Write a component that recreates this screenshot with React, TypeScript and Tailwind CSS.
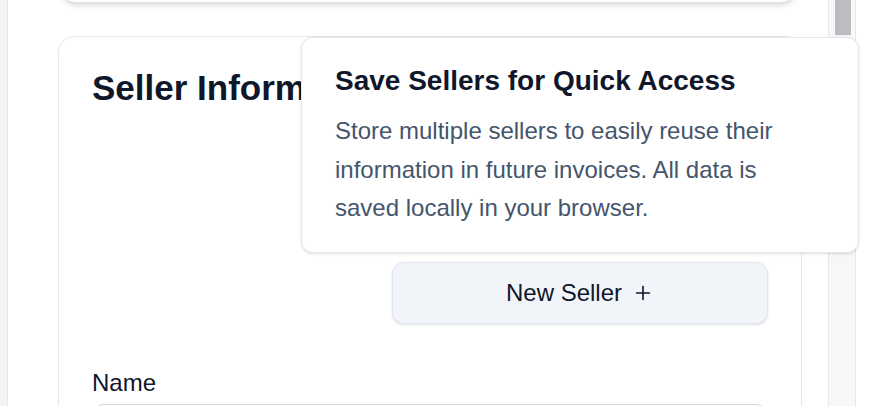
import React from 'react';
import { Plus } from 'lucide-react';

const App: React.FC = () => {
  return (
    <div className="relative w-[888px] h-[406px] overflow-hidden bg-white flex font-['Liberation_Sans',Arial,sans-serif] text-slate-900">
      {/* left gutter */}
      <div className="w-2 shrink-0 bg-gray-100 border-r border-gray-200"></div>

      {/* scrolling content */}
      <div className="w-[820px] shrink-0 flex flex-col">
        {/* previous card, scrolled mostly out of view */}
        <div className="ml-[52px] w-[737px] h-[100px] -mt-[97px] shrink-0 rounded-2xl border border-gray-200 bg-white shadow-md"></div>

        {/* Seller Information card */}
        <section className="ml-[50px] mt-[33px] w-[744px] shrink-0 rounded-2xl border border-gray-200 bg-white px-[33px] pt-[31px]">
          <h2 className="text-[35px] leading-[40px] font-bold">Seller Information</h2>

          <div className="mt-[154px] flex justify-end">
            <button className="w-[376px] h-[62px] flex items-center justify-center gap-2.5 rounded-xl border border-slate-200 bg-slate-100 text-[24px] text-slate-900 shadow-sm">
              New Seller
              <Plus size={22} strokeWidth={1.75} />
            </button>
          </div>

          <label className="block mt-[43px] text-[24px] leading-[32px]">Name</label>
          <div className="mt-[5px] h-[60px] rounded-xl border border-gray-300"></div>
        </section>
      </div>

      {/* scrollbar */}
      <div className="w-[28px] shrink-0 bg-[#f7f7f7] border-x border-gray-200 px-[6px]">
        <div className="h-[35px] w-[16px] bg-[#bcbdc0]"></div>
      </div>

      {/* popover */}
      <div className="absolute left-[301px] top-[37px] w-[558px] rounded-xl border border-slate-200 bg-white pl-[33px] pr-[40px] pt-[25px] pb-[24px] shadow-sm">
        <h3 className="text-[28px] leading-[36px] font-bold text-slate-900">Save Sellers for Quick Access</h3>
        <p className="mt-[13px] text-[24px] leading-[38.5px] text-slate-600">
          Store multiple sellers to easily reuse their information in future invoices. All data is saved locally in your browser.
        </p>
      </div>
    </div>
  );
};

export default App;
